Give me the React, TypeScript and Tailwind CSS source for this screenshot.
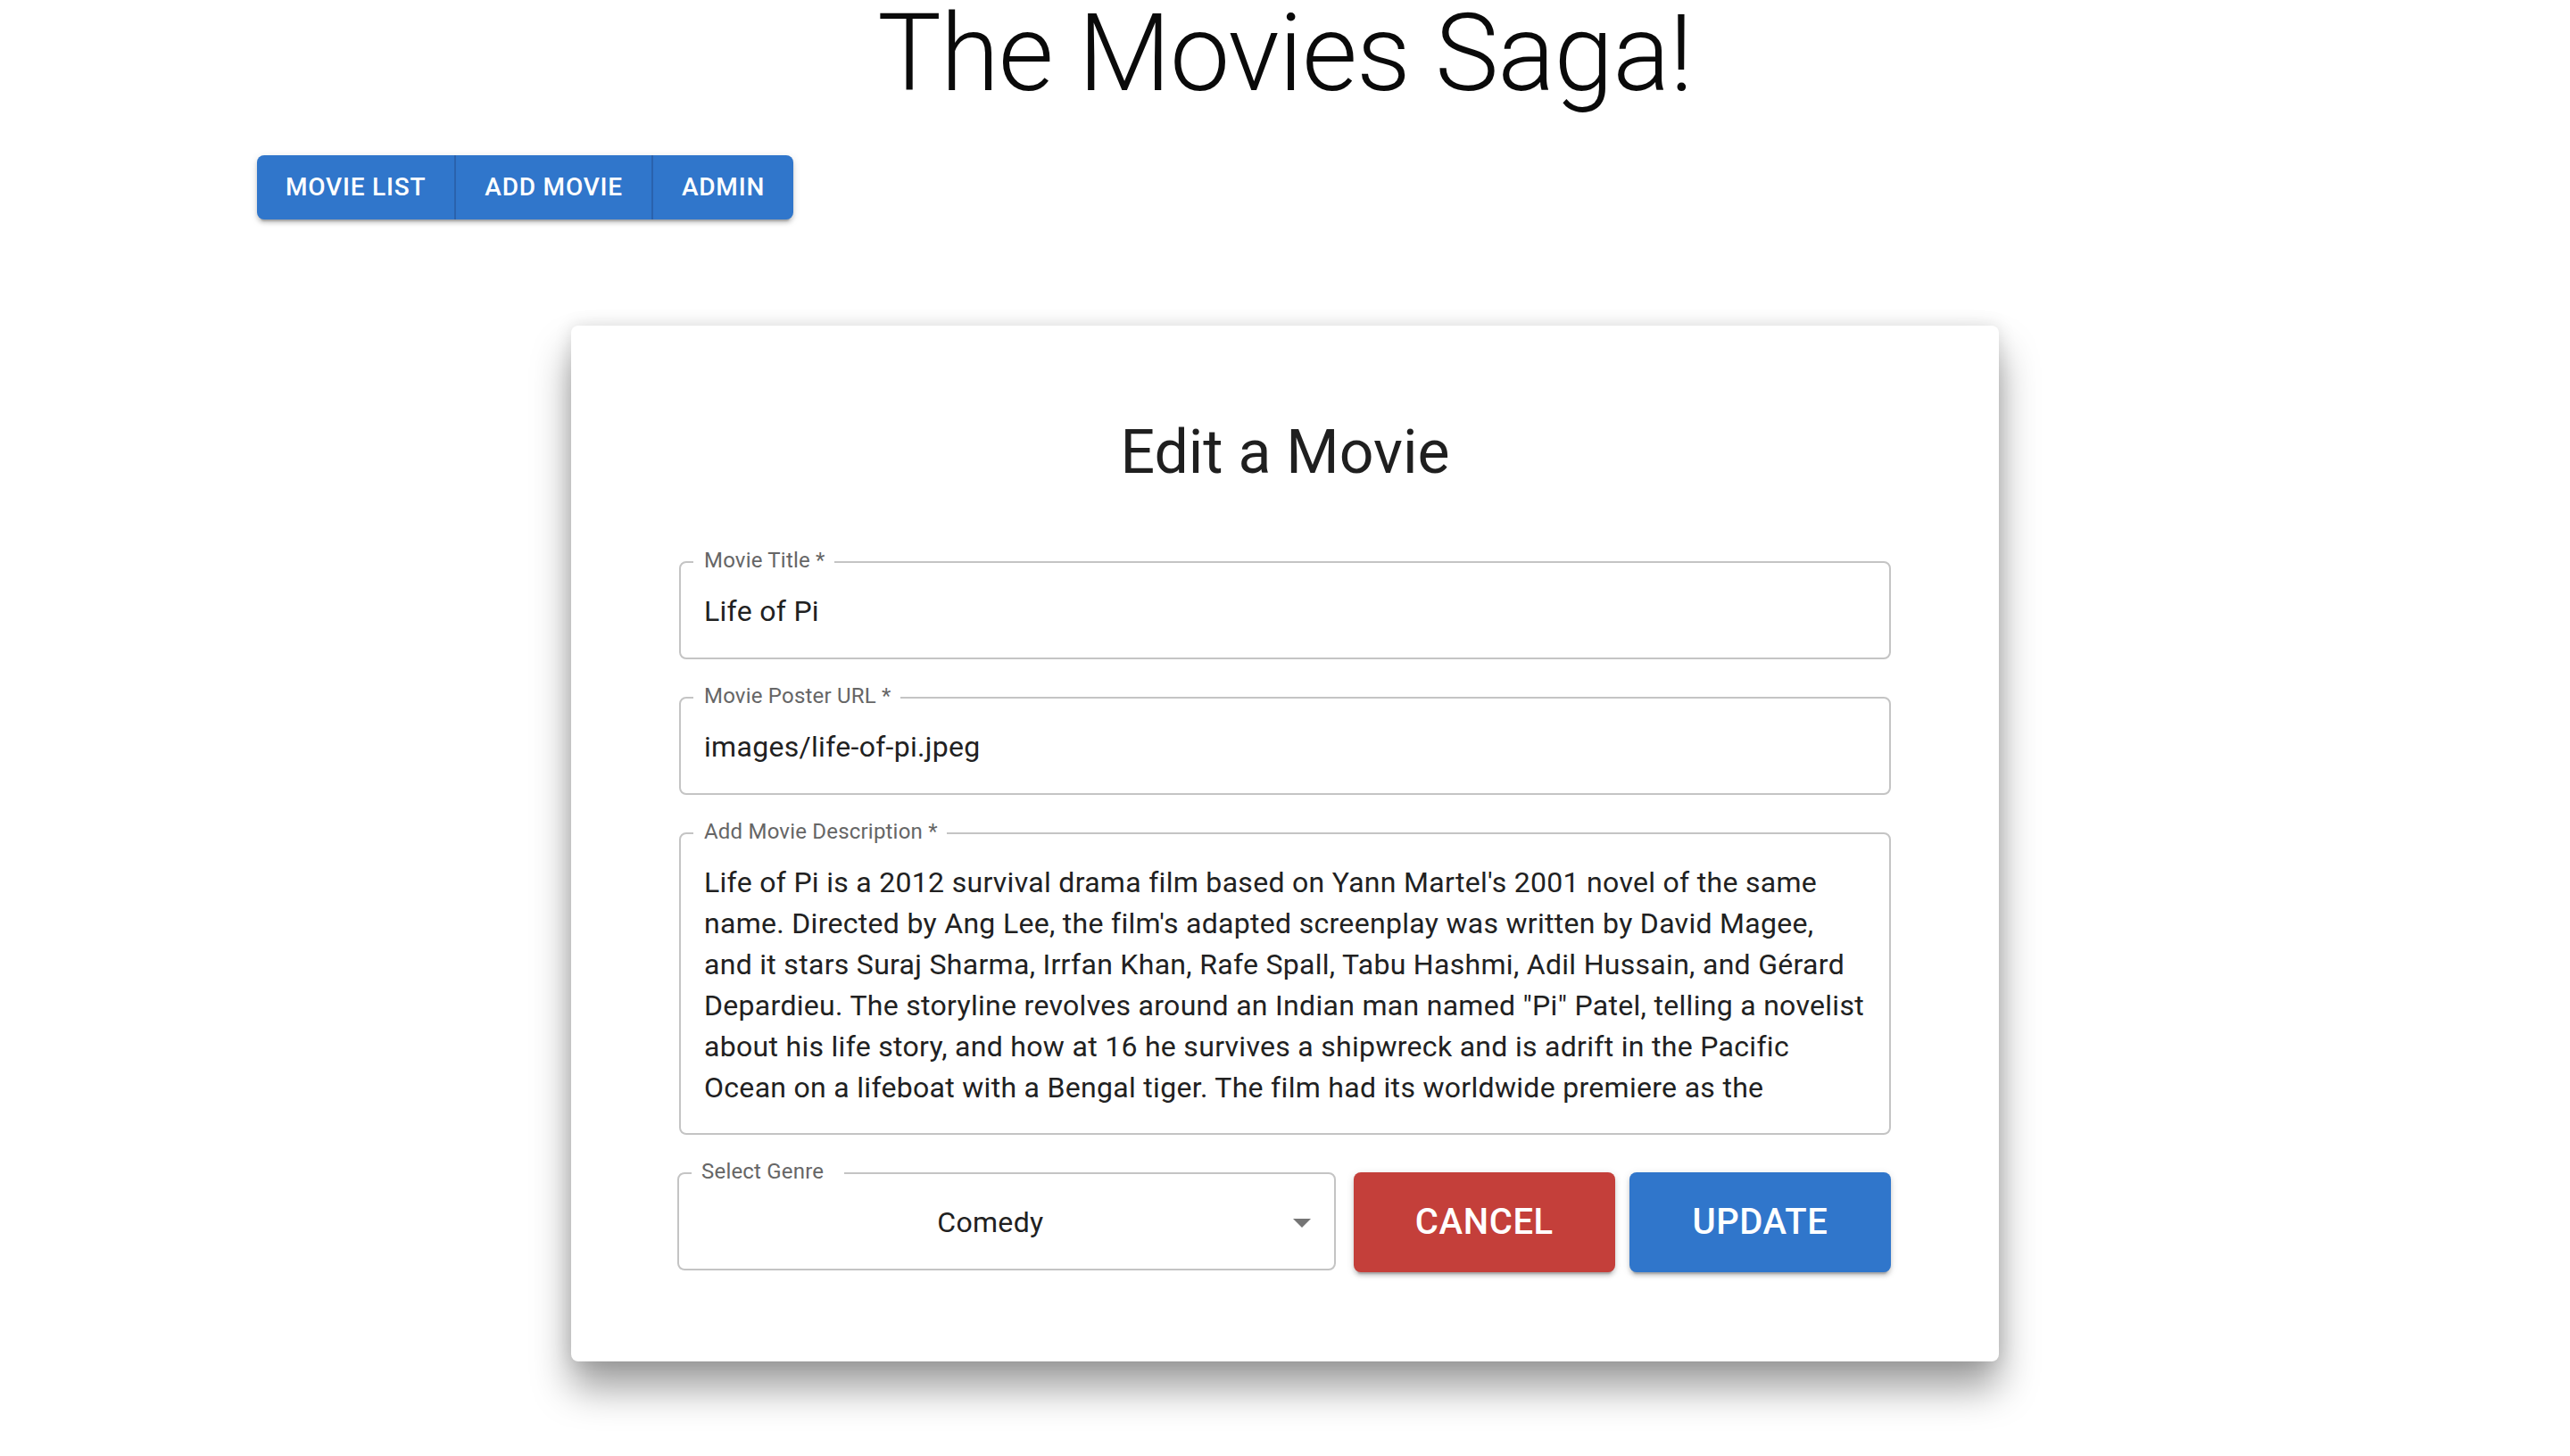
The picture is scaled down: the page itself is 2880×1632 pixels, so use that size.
const font = { fontFamily: 'Roboto, "Helvetica Neue", Arial, sans-serif' };

const description = [
  "Life of Pi is a 2012 survival drama film based on Yann Martel's 2001 novel of the same",
  "name. Directed by Ang Lee, the film's adapted screenplay was written by David Magee,",
  "and it stars Suraj Sharma, Irrfan Khan, Rafe Spall, Tabu Hashmi, Adil Hussain, and Gérard",
  'Depardieu. The storyline revolves around an Indian man named "Pi" Patel, telling a novelist',
  'about his life story, and how at 16 he survives a shipwreck and is adrift in the Pacific',
  'Ocean on a lifeboat with a Bengal tiger. The film had its worldwide premiere as the',
];

const buttonShadow =
  'shadow-[0_6px_2px_-4px_rgba(0,0,0,0.2),0_4px_4px_0_rgba(0,0,0,0.14),0_2px_10px_0_rgba(0,0,0,0.12)]';

function OutlinedField({ label, children, className = '' }: { label: string; children: React.ReactNode; className?: string }) {
  return (
    <div className={`relative rounded-lg border-2 border-[#c4c4c4] ${className}`}>
      <span className="absolute left-[14px] top-[-15px] bg-white pl-[12px] pr-[10px] text-[24px] leading-none tracking-[0.2px] text-[#666666]">
        {label}
      </span>
      {children}
    </div>
  );
}

function NavButton({ label, last }: { label: string; last?: boolean }) {
  return (
    <button
      className={`flex h-[72px] items-center px-[32px] text-[28px] font-medium uppercase tracking-[0.8px] text-white ${
        last ? '' : 'border-r-2 border-[#2a62ad]'
      }`}
    >
      {label}
    </button>
  );
}

export default function App() {
  return (
    <div className="min-h-screen bg-white text-[#212121]" style={font}>
      <h1 className="text-center text-[120px] font-light leading-none tracking-[-1px] text-[#0a0a0a]">The Movies Saga!</h1>

      <div className="mx-auto mt-[54px] w-[2400px] px-[48px]">
        <div className={`inline-flex overflow-hidden rounded-lg bg-[#3076cb] ${buttonShadow}`}>
          <NavButton label="Movie List" />
          <NavButton label="Add Movie" />
          <NavButton label="Admin" last />
        </div>
      </div>

      <div className="mx-auto mt-[119px] w-[1600px] rounded-lg bg-white px-[121px] pt-[100px] pb-[100px] shadow-[0_30px_44px_rgba(0,0,0,0.38),0_0_20px_rgba(0,0,0,0.12)]">
        <h2 className="text-center text-[68px] font-normal leading-[84px] text-[#1f1f1f]">Edit a Movie</h2>

        <div className="mt-[80px] flex flex-col gap-[42px] tracking-[0.3px]">
          <OutlinedField label="Movie Title *" className="h-[110px]">
            <div className="pl-[26px] pt-[31px] text-[32px] leading-[46px]">Life of Pi</div>
          </OutlinedField>

          <OutlinedField label="Movie Poster URL *" className="h-[110px]">
            <div className="pl-[26px] pt-[31px] text-[32px] leading-[46px]">images/life-of-pi.jpeg</div>
          </OutlinedField>

          <OutlinedField label="Add Movie Description *" className="h-[339px]">
            <div className="pl-[26px] pt-[31px] text-[32px] leading-[46px]">
              {description.map((line) => (
                <div key={line} className="whitespace-nowrap">
                  {line}
                </div>
              ))}
            </div>
          </OutlinedField>

          <div className="-ml-[2px] flex items-start gap-[16px]">
            <div className="relative mr-[4px] h-[110px] w-[740px] rounded-lg border-2 border-[#c4c4c4]">
              <span className="absolute left-[14px] top-[-15px] bg-white pl-[11px] pr-[23px] text-[24px] leading-none tracking-[0.2px] text-[#666666]">
                Select Genre
              </span>
              <div className="pl-[28px] pr-[64px] pt-[31px] text-center text-[32px] leading-[46px]">Comedy</div>
              <svg
                className="absolute right-[12px] top-[30px] h-[48px] w-[48px]"
                viewBox="0 0 24 24"
                fill="#757575"
              >
                <path d="M7 10l5 5 5-5z" />
              </svg>
            </div>
            <button
              className={`h-[112px] w-[294px] rounded-lg bg-[#c43f3a] text-[40px] font-medium uppercase tracking-[0.6px] text-white ${buttonShadow}`}
            >
              Cancel
            </button>
            <button
              className={`h-[112px] w-[294px] rounded-lg bg-[#3076cb] text-[40px] font-medium uppercase tracking-[0.6px] text-white ${buttonShadow}`}
            >
              Update
            </button>
          </div>
        </div>
      </div>
    </div>
  );
}
